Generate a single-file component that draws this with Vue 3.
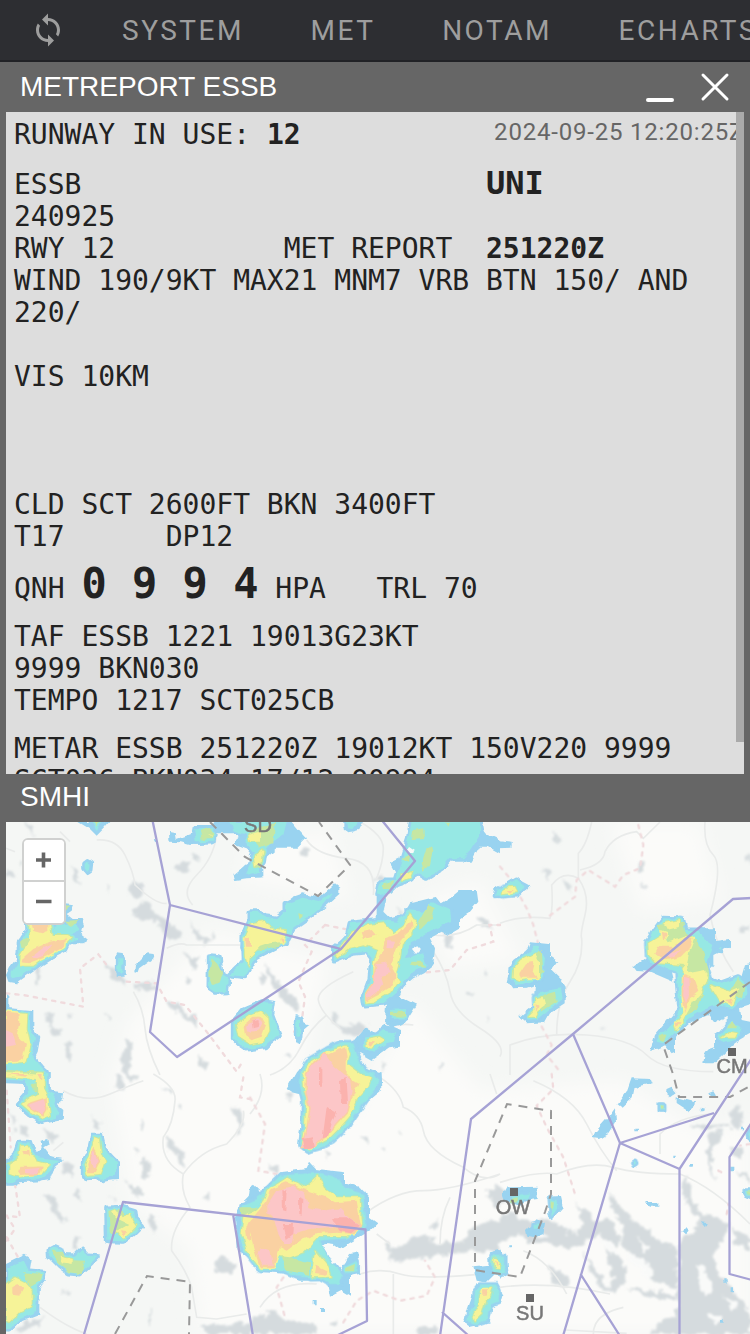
<script setup>
const menu = ['SYSTEM', 'MET', 'NOTAM', 'ECHARTS']

// Map artwork is split in tiles of 250 px, each drawn in a 3x grid.
// Radar echoes: b blue, c cyan, g green, y yellow, o orange, p pink, r red.
const tiles = [
  {
    left: 0, top: 815,
    b: 'M235,21 328,21 312,40 290,62 270,42z M195,265 222,268 215,290 200,300 215,312 245,312 252,330 242,355 268,375 250,385 205,385 195,405 160,430 120,455 70,490 50,505 25,500 18,480 30,455 50,430 50,380 85,335 80,325z M350,415 372,418 372,480 350,482z M405,450 440,415 462,418 455,435 420,460 415,475 403,472z M507,48 527,52 530,72 572,58 582,30 640,30 650,15 870,15 900,50 918,70 890,98 830,98 800,125 790,150 790,187 740,190 705,195 700,180 735,150 750,140 760,110 705,90 705,75 730,55 650,55 640,88 570,90 540,82 508,80z M18,535 25,540 25,585 100,585 100,640 118,665 110,710 100,730 145,765 145,780 18,780z M458,70 468,75 462,85z',
    c: 'M272,15 312,15 290,45z M254,146 262,140 272,146 270,165 262,170 254,160z M160,335 225,325 240,345 225,358 160,360z M60,385 85,345 190,365 240,370 190,385 130,435 60,485 35,490 35,470 55,440z M355,430 367,430 367,475 355,465z M628,422 658,425 662,472 684,485 680,530 645,532 627,520z M585,40 640,38 640,80 590,82z M690,21 860,21 850,60 810,90 780,110 780,170 735,180 765,120 740,90 740,60 700,45z M18,600 90,592 90,640 105,670 95,720 140,775 18,780z',
    g: 'M270,15 310,15 290,33z M600,45 620,38 642,55 635,72 605,75z M635,430 655,450 668,475 660,500 640,510 628,480z M60,380 80,368 115,375 100,395 65,400z M190,318 235,315 215,335z M745,50 800,30 825,25 820,85 780,100z M760,140 795,105 785,155 765,160z M20,765 135,770 135,780 20,780z M190,270 210,272 198,290z',
    y: 'M88,328 150,328 155,360 200,360 220,370 200,380 190,400 130,430 100,452 60,452 62,420 90,375z M745,60 780,50 780,80 750,80z M18,592 82,597 80,640 92,690 80,740 18,745z M625,55 640,58 635,65z',
    o: 'M95,328 145,328 145,345 125,352 100,345z M68,430 100,402 150,380 195,370 192,395 140,425 90,445 65,442z M18,590 55,594 58,625 50,660 78,690 68,730 45,740 18,742z',
    p: 'M95,425 130,398 155,388 130,422 105,432z M18,645 38,655 48,690 18,695z',
    r: ''
  },
  {
    left: 250, top: 815,
    b: 'M280,15 340,15 325,45 295,52 280,40z M690,15 705,55 750,75 750,115 715,95 690,95 665,140 640,140 640,100z M380,210 410,250 400,290 420,310 460,300 480,265 540,250 560,245 575,265 600,250 630,225 680,225 685,260 660,290 630,310 630,340 595,360 575,350 540,370 555,400 550,450 520,475 490,490 460,515 450,540 400,560 430,440 470,330 380,310z M410,535 450,545 500,570 475,610 460,630 425,640 405,620z M137,600 155,605 160,625 175,632 160,645 150,690 135,685z M420,145 450,130 460,100 470,160 440,180z M295,700 345,640 380,655 400,625 450,645 450,695 415,700 365,735 330,715z M745,220 750,220 750,250 745,245z M105,265 130,245 160,235 210,245 255,205 268,215 268,240 210,290z',
    c: 'M288,15 330,15 310,42 292,40z M485,15 690,15 690,60 660,105 640,130 600,130 575,160 530,190 505,175 470,198 440,210 420,230 395,240 380,235 385,212 405,195 435,195 445,165 465,100 475,70z M300,325 345,320 400,315 440,320 475,285 520,290 545,262 600,285 605,320 570,335 530,355 480,385 465,430 520,415 530,450 490,470 465,500 440,530 400,565 345,570 340,545 360,490 365,430 350,410 310,415 255,438 250,400 290,370z M420,585 468,582 468,610 425,612z M342,665 380,660 400,645 438,655 432,680 410,685 370,710 345,700z M-60,480 -30,450 -10,425 -22,395 -20,355 0,330 0,290 20,290 50,305 80,310 105,290 105,268 160,248 210,258 250,230 210,280 180,305 130,340 110,378 70,400 20,425 0,460 -15,485z M-50,620 -20,585 40,560 70,565 65,600 80,640 88,660 60,680 45,695 -10,702 -35,685 -50,670z M142,610 150,615 150,665 142,660z',
    g: 'M490,45 520,40 522,72 485,75z M530,95 548,100 540,150 520,170 515,145z M455,130 485,118 480,140z M500,330 535,270 555,280 545,310 510,345z M485,440 520,440 525,455 480,450z M420,590 465,590 465,605 420,603z M10,365 100,360 85,395 40,405 5,410z M145,295 165,300 150,315z M400,205 430,195 420,225 398,225z M585,20 597,20 592,32z',
    y: 'M310,350 350,328 400,322 430,355 460,335 480,295 498,320 488,355 455,385 450,430 435,480 448,500 430,525 370,560 348,562 348,540 372,500 372,440 385,405 340,388 300,398 262,428 255,420 270,395z M350,672 385,665 402,675 365,700 350,692z M-15,360 0,325 45,318 60,340 108,345 105,380 60,385 30,395 0,425 -5,455 -12,430z M-42,630 0,600 30,588 55,610 58,648 40,680 0,688 -35,665z M457,178 488,168 480,188 455,198z M12,125 40,105 35,140 15,155z',
    o: 'M335,352 365,345 380,362 342,372z M405,370 450,355 485,315 488,340 455,370 440,405 422,450 438,480 430,510 385,540 350,558 350,545 375,505 375,450 395,420z M-14,370 0,368 0,395 -12,395z M-20,630 10,605 35,605 48,630 35,665 5,675 -15,660z M90,370 105,372 100,385z M355,680 375,682 365,695z',
    p: 'M380,448 410,442 422,475 392,482 400,508 375,538 350,554 350,542 372,500z M415,378 435,380 430,400 412,400z M-12,632 25,610 40,625 28,648 -8,650z',
    r: 'M5,620 25,615 30,635 8,640z'
  },
  {
    left: 500, top: 815,
    b: 'M-10,75 38,80 38,98 -10,100z M25,480 35,440 80,410 90,382 150,388 150,425 172,440 155,465 180,490 197,515 197,565 150,595 135,622 80,625 58,605 100,570 105,510 80,518 35,520 20,500z M605,340 645,340 645,378 690,372 690,395 640,420 640,450 630,460z M400,455 440,425 510,460 520,500 450,470 410,468z M720,500 735,448 750,445 750,570 720,580 725,615 750,620 750,655 715,675 640,745 610,745 615,710 645,700 645,660 680,640 680,605 645,625 625,600 565,625 525,665 525,710 515,715 495,690 450,710 465,660 550,560 700,510z',
    c: 'M-10,228 25,210 50,195 60,205 80,215 60,228 45,240 -15,242z M45,440 80,415 100,395 115,395 135,430 128,485 95,500 50,510 35,490z M125,530 180,520 185,555 145,585 115,610 80,610 105,580 110,545z M445,375 460,350 490,310 548,312 555,345 600,345 610,370 640,390 620,450 628,495 660,505 715,485 735,500 740,540 700,580 650,570 610,585 570,610 530,645 490,685 470,680 480,660 520,625 540,580 535,540 530,470 500,460 450,440z M655,400 668,395 664,404z M655,665 695,620 725,640 712,672 670,685z',
    g: 'M95,420 125,405 130,470 110,490z M130,540 165,530 170,560 125,590z M470,330 550,320 555,350 580,370 605,400 625,460 630,500 560,480z M555,540 610,540 590,585 560,600z M690,525 715,490 735,510 725,550z M478,665 500,655 490,682z M680,640 700,620 715,640z',
    y: 'M12,218 42,215 48,232 8,238z M42,462 65,435 105,415 120,440 120,485 90,488 60,496 40,488z M108,550 128,545 135,570 122,580 108,605 85,606 110,580z M445,385 485,360 500,385 550,365 575,365 570,400 560,450 470,445 447,420z M548,460 560,445 565,475 615,465 625,490 600,540 580,560 550,615 525,645 522,635 552,590 548,520z M630,510 690,530 715,520 700,570 660,560z M662,668 690,650 712,655 705,668z M490,325 540,315 540,335 500,345z',
    o: 'M475,395 520,395 560,368 578,372 565,405 545,425 500,435 465,415z M550,485 580,490 595,530 570,550 555,595 549,550z M672,555 700,552 695,570z M526,620 542,622 530,640z M58,475 78,445 102,440 95,470 112,488 62,488z M107,568 116,572 108,592z M20,225 38,225 30,233z M485,350 500,355 490,375z',
    p: 'M552,485 568,490 570,530 558,565 550,540z M500,412 545,407 510,428z',
    r: ''
  },
  {
    left: 0, top: 1074,
    b: 'M18,-10 145,-10 148,50 192,55 190,75 170,90 190,108 188,138 125,150 90,128 48,88 72,60 72,30 18,28z M90,200 110,235 125,222 122,200 145,195 148,210 130,220 150,245 192,258 165,275 150,315 110,322 60,325 40,335 18,335z M315,225 357,260 357,315 300,318z M18,570 75,542 95,555 90,585 138,590 138,618 118,640 118,722 60,745 30,772 18,770z M710,435 735,380 750,365 750,540 720,500z',
    c: 'M80,0 142,0 142,50 165,62 160,90 175,115 170,132 125,142 90,122 55,90 85,60 78,30z M18,270 45,242 57,205 88,205 95,225 115,250 178,258 160,272 145,300 120,314 60,314 40,325 18,325z M250,265 268,230 277,184 302,184 312,225 348,265 348,305 305,314 250,305z M320,402 370,400 402,410 405,435 425,455 400,480 370,502 322,500z M147,528 165,518 182,525 190,545 225,545 245,525 265,545 292,548 265,575 238,600 207,597 178,575 148,545z M25,580 70,560 85,590 132,595 130,615 112,640 108,715 60,735 30,765 18,765z',
    g: 'M155,530 185,530 200,558 255,560 245,600 205,595 175,570z M70,595 128,600 122,620 90,640z M325,410 360,405 400,450 380,480 330,480z M18,270 50,250 60,275z M95,35 120,20 130,50 105,55z',
    y: 'M18,-5 70,0 130,2 132,40 142,60 150,125 125,134 90,112 65,90 92,70 112,60 110,15 18,10z M28,272 57,248 62,215 82,215 98,240 110,262 150,272 125,298 60,308 28,300z M256,272 275,225 283,190 297,195 303,240 316,265 303,302 262,306z M335,412 350,406 365,430 390,420 400,442 410,455 388,478 368,495 350,470 385,450 365,440 345,430z M18,630 45,610 75,625 98,650 98,695 60,715 30,745 18,740z M182,548 215,555 215,570 185,565z',
    o: 'M78,92 140,70 142,108 130,128z M52,292 62,278 128,278 122,298 60,303z M70,228 88,228 90,242 75,240z M262,270 280,218 293,235 298,265 283,298 265,298z M362,472 378,475 372,488z M37,640 55,630 70,645 58,665 37,662z M20,0 85,0 80,8z M115,0 128,0 126,20z M735,465 750,450 750,500 738,490z',
    p: 'M84,92 132,76 138,104 126,122z M78,285 122,282 110,300 78,298z M270,262 281,228 296,262 280,282z',
    r: ''
  },
  {
    left: 250, top: 1074,
    b: 'M-45,430 -25,385 -5,380 0,340 12,332 30,350 60,345 90,295 170,285 180,263 200,285 285,295 285,325 330,340 357,370 357,430 382,448 360,470 310,500 270,525 250,510 210,505 250,560 275,590 300,540 325,535 330,598 300,605 300,665 275,650 240,668 230,620 150,620 110,600 20,590 10,560 -40,530z M188,678 200,678 200,691 188,691z M210,702 222,702 222,714 210,714z M720,535 750,528 770,550 775,590 765,610 735,600 710,625 680,620 670,580 715,575z M125,55 110,45 138,-5 160,-30 165,40 155,62z M360,-15 395,0 397,45 360,75 320,100z M640,745 655,700 680,630 752,640 750,690 725,700 720,745 660,758z',
    c: 'M-25,395 20,375 90,305 170,298 205,298 270,315 280,340 340,360 346,460 290,493 210,500 240,560 275,605 270,630 240,630 210,612 140,608 100,590 30,585 10,555 -20,525z M150,0 170,-40 230,-75 270,-95 310,-95 320,-60 340,-15 375,0 385,15 380,40 350,75 322,115 288,165 250,200 215,220 175,232 152,215 158,160 160,80 150,40z M722,545 765,545 765,600 740,595 725,590z M692,632 738,632 748,650 745,685 722,695 712,738 680,750 652,742 655,715 672,700 675,650z M282,580 322,560 322,592 285,598z',
    g: 'M290,580 315,570 312,592 288,592z M90,545 180,565 180,602 110,590z M-30,400 20,400 20,420 -25,425z',
    y: 'M-20,428 30,405 52,350 110,312 165,340 205,302 225,345 260,370 332,370 336,455 290,486 205,486 160,535 120,550 80,545 60,582 30,582 -10,530 -25,480z M195,530 235,578 245,608 185,610z M160,0 180,-35 240,-70 290,-85 300,-60 290,-30 330,0 365,10 355,35 320,75 300,125 270,160 240,190 200,210 175,225 158,210 165,160 170,70 162,45z M730,552 746,560 748,585 732,582z M692,648 728,642 718,670 705,682 695,718 672,740 668,730 686,695z',
    o: 'M-5,450 45,385 62,345 110,325 160,345 230,370 255,385 320,380 332,450 310,480 260,476 200,480 150,500 110,530 90,520 70,580 30,580 10,520z M200,575 232,590 230,605 195,600z M190,-35 240,-60 285,-80 290,-50 290,10 325,30 310,65 290,110 235,175 185,220 160,215 175,160z M696,646 714,646 710,662 697,662z M735,560 745,565 740,580z',
    p: 'M52,392 80,348 130,335 165,360 175,400 225,412 270,405 300,435 332,455 305,475 250,458 180,465 130,480 125,510 100,510 85,480 70,425 52,418z M32,522 62,532 68,572 38,572 25,545z M172,0 190,-30 225,-60 250,-25 285,5 300,15 305,55 292,110 240,170 190,215 158,222 170,180 182,105 170,60z',
    r: 'M94,345 110,350 106,415 96,412z M147,370 160,375 158,422 148,420z M98,450 132,450 130,480 110,495z M245,430 290,430 330,455 300,478 265,470z M207,-20 217,-20 217,38 207,38z M270,18 290,12 294,90 272,90z M230,98 258,115 245,145 235,185 218,190 226,130z M158,195 186,190 192,218 165,226z'
  },
  {
    left: 500, top: 1074,
    b: 'M395,13 450,15 455,28 420,35 400,45 395,70 365,98 355,90 380,55z M345,103 348,145 325,180 300,195 278,192 285,175 325,130z M500,45 515,38 530,55 510,70 498,60z M530,70 585,85 583,98 563,112 530,90z M20,340 113,338 113,375 90,378 60,392 15,385 8,362z M146,368 180,366 188,400 155,436 145,420z M78,468 110,436 135,450 130,480 100,492 82,488z M435,384 475,384 475,398 450,398z M565,270 580,270 578,278 565,278z M475,86 497,86 497,112 475,112z M392,267 403,256 414,267 403,278z M550,470 561,459 572,470 561,481z M625,58 640,52 648,65 630,68z M602,98 615,102 613,112 603,112z M688,278 700,278 700,292 688,292z M602,445 620,447 615,460z M670,616 680,616 680,626 670,626z M692,640 702,640 702,655 692,655z M660,738 671,738 671,746 660,746z M406,164 414,164 414,172 406,172z M520,248 527,248 527,255 520,255z M722,158 732,158 732,166 722,166z M725,355 745,345 750,345 750,375 735,368z M740,170 750,160 750,205 738,195z M22,511 32,511 32,520 22,520z M0,525 15,560 12,600 0,615z M0,648 10,665 5,685 0,690z',
    c: 'M480,92 492,92 492,106 480,106z M30,365 90,358 85,375 50,385z M150,375 170,378 172,400 155,425z M98,450 120,448 112,465 98,465z M398,265 405,261 408,268 402,272z M735,350 750,350 750,366 738,362z M744,178 750,175 750,195z M0,555 8,560 5,600 0,600z',
    g: 'M482,94 491,94 490,104 483,104z M738,352 750,352 750,364z M152,380 162,382 160,400 152,405z M30,375 50,370 50,385 35,388z M0,560 6,570 0,590z',
    y: '', o: '', p: '', r: ''
  }
]

// Each colour band: echoes of one level, plus the wider rim of the levels inside it.
const bands = [
  { color: '#99d3f0', parts: [['b', 0], ['c', 15], ['y', 26]] },
  { color: '#96e8e4', parts: [['c', 0], ['y', 15]] },
  { color: '#c6e7a3', parts: [['g', 0], ['y', 6]] },
  { color: '#f6f398', parts: [['y', 0], ['o', 9]] },
  { color: '#fad1a2', parts: [['o', 0], ['p', 9]] },
  { color: '#fcc6c7', parts: [['p', 0]] },
  { color: '#fbb2ae', parts: [['r', 0]] }
]

const place = (x, y) => `translate(${x} ${y}) scale(.33333)`

const echoes = bands.flatMap((band) =>
  band.parts.flatMap((part) =>
    tiles
      .filter((tile) => tile[part[0]])
      .map((tile) => ({ color: band.color, rim: part[1], outline: tile[part[0]], at: place(tile.left, tile.top) }))
  )
)

const lakes = [
  [0, 815, 'M75,21 95,30 98,60 85,50z M210,150 225,165 245,210 230,200z M395,200 430,203 430,235 405,250 390,240z M400,285 430,255 480,300 520,330 545,350 540,370 500,365 470,320 400,305z M515,160 570,135 560,165 525,175z M570,315 590,350 630,375 620,390 580,360z M550,415 580,435 600,410 590,465 565,445z M310,445 350,465 375,495 375,515 340,490z M400,510 460,498 470,525 435,530z M500,560 540,570 550,590 580,600 590,640 565,615 520,585z M140,600 155,600 155,630 190,655 160,660z M105,460 118,460 118,510 108,500z M195,685 215,690 210,740 195,725z M365,730 385,670 395,680 390,780 370,775z M590,720 625,740 615,775 600,760z M18,160 45,180 20,185z M315,205 333,215 325,230z M320,595 340,605 330,615z M205,595 218,600 210,615z M60,130 70,140 65,160z M550,490 575,495 560,510z M580,115 600,125 590,145z M635,350 650,370 635,380z'],
  [250, 815, 'M45,445 80,500 130,545 150,590 100,560 60,500z M240,590 270,610 265,640 330,620 360,640 350,665 290,660 260,640z M575,345 605,360 600,400 580,390z M680,300 710,320 730,350 700,335z M645,535 670,530 665,550z M700,460 720,470 708,485z M370,200 395,180 400,210z M160,95 180,100 180,120 158,115z M705,600 718,605 712,625z M565,740 580,745 575,765z M390,745 410,750 400,775z M435,270 465,300 450,298z M30,465 40,470 45,505 30,490z M100,715 125,720 120,735z M640,90 655,110 640,130z'],
  [500, 815, 'M160,50 175,70 180,90 165,75z M125,160 150,175 145,195z M190,195 215,210 210,230 195,215z M412,150 430,140 432,170 415,170z M422,200 435,205 430,230z M720,345 750,330 750,340 725,358z M740,120 750,110 750,150z M300,635 315,635 305,645z'],
  [0, 1074, 'M345,0 370,15 370,50 355,40z M380,0 415,10 410,25 385,20z M490,40 520,55 510,65z M530,80 545,90 540,105z M500,190 520,200 560,270 555,290 530,250 505,230z M420,140 435,155 430,170z M430,250 455,270 445,315 425,305z M375,315 400,335 430,350 425,370 390,350z M275,120 290,140 300,155 285,165z M130,160 175,185 160,210 140,190z M190,265 220,270 215,310 190,290z M230,345 245,350 240,385 228,370z M125,360 160,365 175,410 205,440 180,440 155,400z M450,415 472,425 465,470 448,455z M640,570 675,545 710,580 700,600 650,590z M600,755 720,750 750,745 750,780 610,780z M690,105 715,100 735,150 710,190 718,140z M405,220 417,225 410,240z M60,160 85,160 82,185 60,185z M220,495 235,490 232,530 218,515z M190,655 210,650 205,662z M95,730 130,735 115,755 60,775 45,775z M18,105 50,135 45,145z M330,370 350,375 345,390z M610,370 625,355 625,380z M447,705 453,705 453,760 447,755z M35,160 48,165 40,175z'],
  [250, 1074, 'M400,505 430,525 520,480 560,510 640,500 680,450 750,440 750,530 690,530 600,540 425,563 415,535z M710,350 750,335 750,400 730,390z M0,725 50,730 55,710 120,740 190,745 200,780 0,780z M335,195 360,185 358,205z M445,170 460,175 453,190z M395,215 412,220 403,235z M225,230 240,235 235,255z M60,270 85,280 80,300z M540,460 570,430 550,465z M110,60 130,60 115,85z M500,765 560,755 560,780 500,780z M240,745 270,740 250,760z'],
  [500, 1074, 'M0,430 40,420 80,440 140,430 170,450 235,480 250,455 240,410 225,380 250,410 300,440 330,430 360,500 350,520 300,480 250,510 230,510 210,525 150,510 90,510 60,480 0,510z M330,350 350,390 400,440 450,470 490,510 530,520 530,640 480,630 440,600 400,550 360,500 370,450 330,400z M310,520 370,560 380,620 340,660 320,640 340,620z M250,530 290,590 330,650 310,650 270,590z M380,640 450,650 530,665 530,680 440,665z M140,570 205,610 210,640 160,630 155,600z M560,300 575,370 600,410 640,430 690,450 670,500 640,540 650,590 700,650 750,710 750,780 450,780 480,740 530,730 540,500 590,470 600,430 555,390 545,330z M690,130 715,85 730,130 720,165 695,150z M630,175 670,170 640,225 635,270 650,330 635,300 620,240z M570,155 690,150 690,162 570,163z M695,220 730,225 720,260 695,245z M710,290 750,310 750,330 720,305z M700,460 750,490 750,540 700,500z M0,340 20,360 10,390 0,390z']
]

// Islands inside the archipelago and the big lake.
const islands = 'M626,1252 648,1262 655,1280 640,1272z M598,1236 612,1244 618,1256 604,1248z M636,1238 650,1246 646,1252z M697,1262 707,1275 714,1290 704,1296 698,1280z M706,1312 722,1318 716,1326z M560,1224 572,1228 566,1234z M534,1230 548,1234 540,1238z M724,1296 736,1306 732,1312z'

const roads = [
  [0, 815, 'M290,75 Q350,70 375,120 T405,210 Q470,270 500,265 M650,60 Q640,130 590,180 T578,270 M400,530 Q430,580 435,640 T480,780 M18,100 45,110 M500,400 Q540,380 560,390 L720,390 M180,50 210,80'],
  [250, 815, 'M170,75 Q200,120 290,130 T370,240 M330,20 Q400,60 400,100 T380,190 M550,410 Q590,470 600,530 T690,640 T750,725 M310,470 Q200,520 205,555 T270,640 M350,670 Q420,620 490,630 M550,360 Q620,370 680,330 L750,330 M230,600 Q180,640 150,700 T60,780'],
  [500, 815, 'M275,21 Q260,90 235,115 V190 Q270,240 255,300 T245,370 Q250,440 210,500 T170,660 M0,325 Q60,300 150,310 Q160,280 155,210 Q190,165 235,190 M240,165 Q310,150 315,110 Q340,60 410,50 L430,70 480,21 M615,21 Q610,90 640,120 T630,300 Q650,400 700,470 M30,780 V690 Q130,650 260,660 T440,720 T640,770'],
  [0, 1074, 'M190,50 Q260,90 330,60 T430,20 M460,0 Q530,40 525,80 Q520,150 490,190 Q480,260 550,300 Q600,230 680,210 Q740,150 730,110 M550,300 Q540,350 570,400 Q510,470 515,530 Q560,590 575,640 L590,730 650,735 740,720 M120,700 Q200,760 260,780 M18,320 60,330 M160,230 190,205'],
  [250, 1074, 'M390,10 Q450,50 460,100 Q510,120 520,170 Q530,230 640,280 Q700,330 750,300 M350,415 Q440,350 520,350 T750,300 M570,510 Q570,430 600,370 M330,600 Q390,580 450,600 T750,595 M30,700 Q80,620 200,630 M430,600 V780 M380,480 420,510 M720,0 740,60 M30,0 Q50,60 0,120'],
  [500, 1074, 'M100,20 Q220,70 260,150 T350,290 M0,325 Q110,290 170,300 Q270,260 340,280 T540,300 Q640,340 750,450 M480,240 V180 Q530,130 630,120 M0,640 Q150,620 330,660 M195,768 380,778 M280,780 Q280,720 370,700 M70,530 Q150,560 200,660']
]

const borders = [
  [0, 815, 'M18,535 70,540 250,575 240,460 295,418 320,450 M380,500 470,505 500,560 555,570 620,650 710,770 730,735'],
  [250, 815, 'M225,330 165,390 185,410 145,500 165,545 155,620 125,660 M225,330 300,345 M530,472 600,465 650,405 730,380 718,330 750,330'],
  [500, 815, 'M415,30 430,90 420,160 370,180 345,215 265,165 230,195 225,245 145,305 M0,155 30,190 80,280 100,330 118,400 M125,635 155,690 140,720 180,770'],
  [0, 1074, 'M20,50 32,220 M45,330 60,430 20,425 45,465 20,500 M20,490 60,560 M730,10 720,70 750,75'],
  [250, 1074, 'M0,70 45,150 25,290 80,300 M100,610 80,640 105,730 M280,745 320,680 370,650 450,680 530,665 555,610 525,560'],
  [500, 1074, 'M155,0 160,45 110,95 140,160 190,250 225,360 M750,210 720,215 M680,420 685,390 M655,290 675,300']
]

const meadows = 'M130,1020 210,930 330,960 300,1080 350,1120 410,1000 480,1090 620,1080 700,1130 750,1120 750,1334 200,1334 190,1250 130,1200 110,1080z M250,840 330,830 350,900 240,880z M610,822 700,822 720,900 640,910z M420,900 480,880 520,960 450,970z'

const stations = [
  { name: 'CM', x: 732, y: 1052, tx: 732, ty: 1072.5 },
  { name: 'OW', x: 514, y: 1192, tx: 513, ty: 1214 },
  { name: 'SU', x: 530, y: 1298, tx: 530, ty: 1320 }
]
</script>

<template>
  <div class="screen">
    <nav class="menu">
      <svg class="sync" viewBox="0 0 24 24"><path d="M12 4V1L8 5l4 4V6c3.31 0 6 2.69 6 6 0 1.01-.25 1.97-.7 2.8l1.46 1.46C19.54 15.03 20 13.57 20 12c0-4.42-3.58-8-8-8zm0 14c-3.31 0-6-2.69-6-6 0-1.01.25-1.97.7-2.8L5.24 7.74C4.46 8.97 4 10.43 4 12c0 4.42 3.58 8 8 8v3l4-4-4-4v3z" /></svg>
      <span v-for="item in menu" :key="item" class="item">{{ item }}</span>
    </nav>

    <section class="window">
      <header class="bar report-bar">
        <span>METREPORT ESSB</span>
        <svg class="controls" width="90" height="36" viewBox="0 0 90 36"><path class="min" d="M8 26H32" /><path class="close" d="M63 1 87 25M87 1 63 25" /></svg>
      </header>
      <div class="report">
        <div class="first"><pre>RUNWAY IN USE: <b>12</b></pre><time>2024-09-25 12:20:25Z</time></div>
        <pre class="line">ESSB                        <b class="uni">UNI</b></pre>
        <pre>240925
RWY 12          MET REPORT  <b>251220Z</b>
WIND 190/9KT MAX21 MNM7 VRB BTN 150/ AND
220/

VIS 10KM



CLD SCT 2600FT BKN 3400FT
T17      DP12</pre>
        <pre class="line qnh">QNH <b>0 9 9 4</b> HPA   TRL 70</pre>
        <pre>TAF ESSB 1221 19013G23KT
9999 BKN030
TEMPO 1217 SCT025CB</pre>
        <pre class="metar">METAR ESSB 251220Z 19012KT 150V220 9999
SCT026 BKN034 17/12 Q0994</pre>
        <div class="thumb"></div>
      </div>
    </section>

    <section class="window">
      <header class="bar map-bar"><span>SMHI</span></header>
      <div class="map">
        <svg class="canvas" viewBox="6 822 744 512">
          <defs>
            <filter id="rough" filterUnits="userSpaceOnUse" x="0" y="815" width="760" height="530">
              <feTurbulence type="fractalNoise" baseFrequency=".12" numOctaves="3" seed="4" result="n" />
              <feDisplacementMap in="SourceGraphic" in2="n" scale="11" xChannelSelector="R" yChannelSelector="G" />
              <feGaussianBlur stdDeviation="1" />
            </filter>
            <filter id="soft" filterUnits="userSpaceOnUse" x="0" y="815" width="760" height="530">
              <feGaussianBlur stdDeviation="9" />
            </filter>
            <filter id="cells" filterUnits="userSpaceOnUse" x="0" y="815" width="760" height="530">
              <feTurbulence type="fractalNoise" baseFrequency=".14" numOctaves="1" seed="8" result="n" />
              <feDisplacementMap in="SourceGraphic" in2="n" scale="6" xChannelSelector="R" yChannelSelector="G" />
              <feGaussianBlur stdDeviation=".6" />
            </filter>
          </defs>
          <rect x="6" y="822" width="744" height="512" fill="#f5f7f5" />
          <path class="meadow" :d="meadows" filter="url(#soft)" />
          <g class="lakes" filter="url(#rough)">
            <path v-for="(l, i) in lakes" :key="i" :transform="place(l[0], l[1])" :d="l[2]" />
            <path class="island" :d="islands" />
          </g>
          <g class="roads">
            <path v-for="(r, i) in roads" :key="i" :transform="place(r[0], r[1])" :d="r[2]" />
          </g>
          <g class="borders">
            <path v-for="(r, i) in borders" :key="i" :transform="place(r[0], r[1])" :d="r[2]" />
          </g>
          <g filter="url(#cells)" class="echoes">
            <path v-for="(e, i) in echoes" :key="i" :d="e.outline" :fill="e.color" :stroke="e.rim ? e.color : 'none'" :stroke-width="e.rim" :transform="e.at" />
            <path fill="#f9faf9" d="M412,949 416,944 421,949 416,954z M322,1244 332,1246 340,1251 350,1246 344,1259 333,1264 328,1254z M409,846 415,850 410,853 406,851z" />
          </g>
          <path class="dashed" d="M210,822 245,857 318,896 350,865 319,822M475,1262V1181L507,1104 551,1111V1194L545,1212 520,1277 474,1270M115,1334 147,1276 190,1282 189,1334M750,982 663,1045 673,1074 679,1097H730L750,1086" />
          <path class="airspace" d="M152,818 170,905 150,1032 177,1057 341,949 415,861 380,818M170,905 341,949M752,898 733,899 573,1034 471,1119 440,1336M573,1034 620,1143 563,1336M714,1113 620,1143 679.5,1169V1336M679.5,1169 752,1058M752,1122 729.5,1157V1274L752,1280M580.5,1274 620,1336M442,1312 469,1336M83.5,1336 123,1202 365.5,1229.5 367,1321 338,1335M233,1214 253,1336" />
          <g class="stations">
            <text x="258" y="832">SD</text>
            <g v-for="s in stations" :key="s.name">
              <rect :x="s.x - 4" :y="s.y - 4" width="8" height="8" />
              <text :x="s.tx" :y="s.ty">{{ s.name }}</text>
            </g>
          </g>
        </svg>
        <div class="zoom">
          <button type="button"><svg viewBox="0 0 16 16"><path d="M0 8H15M7.500 .5V15.500" /></svg></button>
          <button type="button"><svg viewBox="0 0 16 16"><path d="M0 7.500H15.500" /></svg></button>
        </div>
      </div>
    </section>
  </div>
</template>

<style>
body { margin: 0; overflow: hidden; }
</style>

<style scoped>
.screen { width: 750px; height: 1334px; overflow: hidden; background: #666; display: flex; flex-direction: column; }
.menu { box-sizing: border-box; height: 62px; flex: none; background: #2d2e32; border-bottom: 2px solid #212226; display: flex; align-items: center; padding-left: 30px; white-space: nowrap; overflow: hidden; }
.sync { width: 36px; height: 36px; flex: none; fill: #9e9e9e; margin-right: 56px; }
.item { font: 28px/60px Roboto, sans-serif; letter-spacing: 2.5px; color: #9e9e9e; margin-right: 66.7px; padding-top: 2px; }
.window { flex: none; }
.bar { box-sizing: border-box; display: flex; justify-content: space-between; padding: 0 20px; color: #fff; font: 28px/50px "Liberation Sans", Arial, sans-serif; }
.report-bar { height: 50px; }
.map-bar { height: 48px; line-height: 46px; }
.controls { margin: 12px 0 0; fill: none; stroke: #fff; stroke-width: 3; stroke-linecap: round; overflow: visible; }
.controls .min { stroke-width: 4; }
.report { position: relative; box-sizing: border-box; width: 738px; height: 662px; margin-left: 6px; padding: 7px 0 0 8px; overflow: hidden; background: #ddd; color: #222; }
pre { margin: 0; font: 28px/32px "DejaVu Sans Mono", monospace; white-space: pre; }
.first { display: flex; height: 50px; }
time { margin: -1px 0 0 193.5px; font: 24px/28px Roboto, sans-serif; letter-spacing: .8px; color: #666; white-space: nowrap; }
.line { height: 32px; }
.line b { line-height: 1px; }
.uni { font-size: 32px; }
.qnh { height: 68px; line-height: 72px; }
.qnh b { font-size: 42px; }
.metar { margin-top: 16px; }
.thumb { position: absolute; top: 0; right: 0; width: 8px; height: 630px; background: #aaa; }
.map { position: relative; width: 744px; height: 512px; margin-left: 6px; overflow: hidden; }
.canvas { display: block; width: 744px; height: 512px; }
.meadow { fill: #fbfbf9; }
.lakes { fill: #d5dbde; }
.island { fill: #f9faf9; }
.roads { fill: none; stroke: #e9ebea; stroke-width: 5; }
.borders { fill: none; stroke: #f0dbdd; stroke-width: 7; stroke-dasharray: 10 18; stroke-linecap: round; }
.echoes { stroke-linejoin: round; }
.dashed { fill: none; stroke: #999; stroke-width: 2; stroke-dasharray: 9 7; }
.airspace { fill: none; stroke: #a6a2d5; stroke-width: 2.3; stroke-linejoin: round; }
.stations { fill: #666; }
.stations text { font: 20px "Liberation Sans", Arial, sans-serif; text-anchor: middle; fill: #777; stroke: #777; stroke-width: .5; }
.zoom { position: absolute; left: 16px; top: 16px; width: 40px; border: 2px solid #d0d1d0; border-radius: 6px; overflow: hidden; background: #fff; }
.zoom button { display: flex; align-items: center; justify-content: center; width: 40px; height: 40px; padding: 0; border: 0; background: #fff; }
.zoom button + button { border-top: 2px solid #d0d1d0; height: 43px; padding-bottom: 2px; }
.zoom svg { width: 16px; height: 16px; fill: none; stroke: #666; stroke-width: 3.600; }
</style>
